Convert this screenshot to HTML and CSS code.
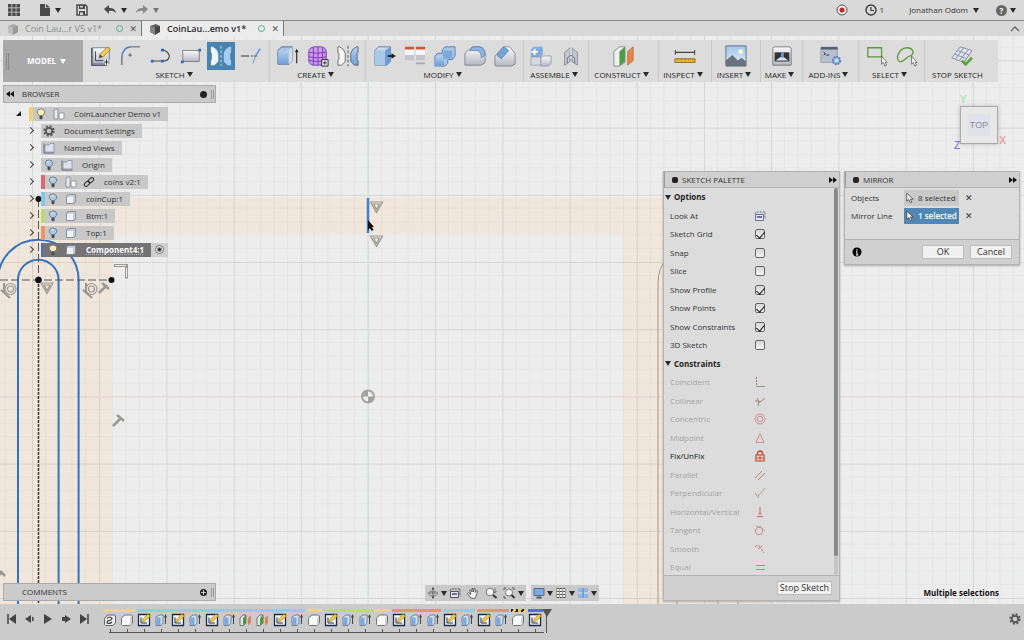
FILE: index.html
```html
<!DOCTYPE html>
<html lang="en">
<head>
<meta charset="utf-8">
<title>CoinLauncher Demo v1</title>
<link rel="stylesheet" href="styles.css">
</head>
<body>
<svg class="defs" aria-hidden="true">
  <defs>
    <linearGradient id="blue" x1="0" y1="0" x2="0" y2="1"><stop offset="0" stop-color="#b4d0ec"/><stop offset="1" stop-color="#6f9fd6"/></linearGradient>
    <linearGradient id="silver" x1="0" y1="0" x2="0" y2="1"><stop offset="0" stop-color="#fbfbfd"/><stop offset="1" stop-color="#b6b8c4"/></linearGradient>
    <linearGradient id="sky" x1="0" y1="0" x2="0" y2="1"><stop offset="0" stop-color="#9fc6ea"/><stop offset="1" stop-color="#e6f1f8"/></linearGradient>
  </defs>
  <symbol id="i-sketch" viewBox="0 0 24 24"><path d="M2 3v19h17" fill="none" stroke="#2c3140" stroke-width="1.2"/><path d="M3 3h18v17H3z" fill="url(#silver)" stroke="#5d6377" stroke-width=".8"/><path d="M6 7v10h9" fill="none" stroke="#33405e"/><path d="M10 14l1-4 8-8 3 3-8 8z" fill="#f2cf55" stroke="#8f6c20" stroke-width=".8"/><path d="M10 14l1-4 2.500 2.800z" fill="#444"/><path d="M18 15v7M14.500 18.500h7" stroke="#fff" stroke-width="3"/><path d="M18 15.500v6M15 18.500h6" stroke="#333" stroke-width="1.200"/></symbol>
  <symbol id="i-fillet" viewBox="0 0 24 24"><path d="M2 22v-9" stroke="#444" fill="none"/><path d="M2 14Q2 3 12 2" fill="none" stroke="#4d7fc4" stroke-width="1.600"/><path d="M12 2h10" stroke="#555"/><path d="M9 11h4M11 9v4" stroke="#555"/></symbol>
  <symbol id="i-line" viewBox="0 0 24 24"><path d="M2 17.500h11M13 17.500c10 0 11-8 1-12.500" fill="none" stroke="#444" stroke-width="1.200"/><path d="M1 16h3v3H1zM12 16h3v3h-3zM12 4h3v3h-3z" fill="#3565c8"/></symbol>
  <symbol id="i-rect" viewBox="0 0 24 24"><path d="M3 6h18v12H3z" fill="url(#silver)" stroke="#666" stroke-width=".8"/><path d="M1 17h3v3H1zM20 4h3v3h-3z" fill="#3565c8"/></symbol>
  <symbol id="i-mirror" viewBox="0 0 24 24"><path d="M3 2l4 3 2 4v9l-4 4H1v-5l1-1V9L1 8V2z" fill="#eef4fb"/><path d="M21 2l-4 3-2 4v9l4 4h4v-5l-1-1V9l1-1V2z" fill="#a6cdef"/><path d="M12 1v22" stroke="#cfe2f2" stroke-dasharray="3 2"/></symbol>
  <symbol id="i-trim" viewBox="0 0 24 24"><path d="M1 12h9" stroke="#444" stroke-width="1.200"/><path d="M12 12h7" stroke="#333" stroke-dasharray="2 1"/><path d="M14 20l3-8" stroke="#5a92d8"/><path d="M17 12l5-8" stroke="#5a92d8" stroke-width="1.600"/></symbol>
  <symbol id="i-extrude" viewBox="0 0 24 24"><path d="M1 6l4-4h12v15l-4 4H1z" fill="#a5c6ea" stroke="#3c506c" stroke-width=".8"/><path d="M1.500 6h11v15h-11z" fill="url(#blue)"/><path d="M13 6v15l4-4V2z" fill="#d9dce8"/><path d="M21.500 20V6" stroke="#222" stroke-width="1.200"/><path d="M19.500 8l2-4 2 4z" fill="#222"/></symbol>
  <symbol id="i-form" viewBox="0 0 24 24"><path d="M2 7q0-4 6-5h8q5 1 5 6v9q-1 5-7 5H7q-5-1-5-5z" fill="#c99bea" stroke="#7d34b2"/><path d="M2 8q9 2 19 0M2 13q9 2 19 0M2 17q9 2 18 0M7 3v19M12 2v20M17 3v18" stroke="#7d34b2" fill="none"/><path d="M16 16h7v7h-7z" fill="#eee" stroke="#222"/><path d="M17.500 19.500h4M19.500 17.500v4" stroke="#222"/></symbol>
  <symbol id="i-mirror3" viewBox="0 0 24 24"><path d="M3 2l4 3 2 4v9l-4 4H1v-5l1-1V9L1 8V2z" fill="#f5f5f5" stroke="#444" stroke-width=".8"/><path d="M21 2l-4 3-2 4v9l4 4h4v-5l-1-1V9l1-1V2z" fill="url(#blue)" stroke="#3c506c" stroke-width=".8"/><path d="M12 1v22" stroke="#444" stroke-dasharray="3 2"/></symbol>
  <symbol id="i-press" viewBox="0 0 24 24"><path d="M1 6l4-4h13v16l-4 4H1z" fill="#c7dcf2" stroke="#4a5f80" stroke-width=".8"/><path d="M1 6h11v16H1z" fill="#a9c8ea"/><path d="M12 6v16h2l4-4V2z" fill="#6f9fd6"/><path d="M15 12h5" stroke="#222" stroke-width="2"/><path d="M19 9l5 3-5 3z" fill="#222"/></symbol>
  <symbol id="i-align" viewBox="0 0 24 24"><path d="M1 4h10v13H1zM13 4h10v13H13z" fill="#f6f6f8"/><path d="M1 11h10v6H1zM13 11h10v6H13z" fill="#c3c4cd"/><path d="M1 2h10v3H1zM13 2h10v3H13z" fill="#cf5736"/><path d="M13 19h10v2H13z" fill="#a9a9b4"/></symbol>
  <symbol id="i-combine" viewBox="0 0 24 24"><path d="M1 12l3-3h5V5l3-3h11v10l-3 4h-5v4l-3 3H1z" fill="#a9c8ea" stroke="#4167a0" stroke-width=".8"/><path d="M2 12h9v10H2z" fill="url(#blue)"/><path d="M10 6h10v9H10z" fill="#7daadb"/></symbol>
  <symbol id="i-round" viewBox="0 0 24 24"><path d="M1 22V9l8-7h8q6 1 6 9v8l-4 3z" fill="url(#silver)" stroke="#6c7082" stroke-width=".8"/><path d="M6 6l4-4h7q6 1 6 9l-4 3q0-8-6-8z" fill="#8db7e3" stroke="#4a6f9f" stroke-width=".7"/></symbol>
  <symbol id="i-chamfer" viewBox="0 0 24 24"><path d="M1 22V12l9-10h7l6 7v12l-4 2H3z" fill="url(#silver)" stroke="#6c7082" stroke-width=".8"/><path d="M3 11l8-9 5 4-8 9z" fill="#73a5dc" stroke="#4a6f9f" stroke-width=".7"/></symbol>
  <symbol id="i-joint" viewBox="0 0 24 24"><path d="M1 5l3-3h10v9l-3 3H1z" fill="#7fabdf"/><path d="M1 13h11v9H1z" fill="#d5d7e1" stroke="#80859a" stroke-width=".6"/><path d="M12 14l3-2h8v8l-3 3h-8z" fill="url(#silver)" stroke="#80859a" stroke-width=".7"/><path d="M5 4v7M1.500 7.500h7" stroke="#fff" stroke-width="2"/></symbol>
  <symbol id="i-asbuilt" viewBox="0 0 24 24"><path d="M5 8l6-5v15l-6 4zM19 8l-6-5v15l6 4z" fill="#c4c7d0" stroke="#777b88" stroke-width=".8"/><path d="M12 3v12" stroke="#fff"/><path d="M8 20v-6l4-3 4 3v6" fill="none" stroke="#70747f"/></symbol>
  <symbol id="i-plane" viewBox="0 0 24 24"><path d="M1 7l6-5h6v17l-6 4H1z" fill="#eef1f1" stroke="#6b7279" stroke-width=".8"/><path d="M7 7l6-5v16l-6 5z" fill="#4f9b45"/><path d="M16 7l6-5v15l-6 5z" fill="#e8854c" stroke="#b65d2c" stroke-width=".7"/></symbol>
  <symbol id="i-measure" viewBox="0 0 24 24"><path d="M1 8h22M1.500 5.500v5M22.500 5.500v5" stroke="#444" stroke-width="1.200"/><path d="M1 15h22v4H1z" fill="#e9b93b" stroke="#8a671c"/><path d="M4 15v2M8 15v2M12 15v2M16 15v2M20 15v2" stroke="#a58030"/></symbol>
  <symbol id="i-image" viewBox="0 0 24 24"><path d="M1 1h22v22H1z" fill="url(#sky)" stroke="#5a6a7e"/><circle cx="17" cy="7" r="2.500" fill="#fffad0"/><path d="M1 17l7-6 6 6 4-3 5 4v5H1z" fill="#69717f"/></symbol>
  <symbol id="i-make" viewBox="0 0 24 24"><path d="M2 4q0-2 3-2h14q3 0 3 2v18H2z" fill="url(#silver)" stroke="#777"/><path d="M4 8h16v10H4z" fill="#333"/><path d="M5 17l7-5 7 5z" fill="#dce9f5"/><path d="M11 8h3v5l-2 2-1-2z" fill="#6d9bd0"/></symbol>
  <symbol id="i-addin" viewBox="0 0 24 24"><path d="M1 3h18v16H1z" fill="#b7bfd1" stroke="#7d8598" stroke-width=".7"/><path d="M1 2h18v3H1z" fill="#56617a"/><path d="M4 8l2 1.500L4 11M7 11h3" stroke="#222" fill="none"/><circle cx="18" cy="17" r="4" fill="#9abbe2" stroke="#4d77b4" stroke-width="2" stroke-dasharray="2 1"/><circle cx="18" cy="17" r="1.500" fill="#e7eef8"/></symbol>
  <symbol id="i-arrow" viewBox="0 0 10 14"><path d="M1 1v10l2.500-2 1.800 4 2-1-1.800-3.600H9z" fill="#f5f5f5" stroke="#444"/></symbol>
  <symbol id="i-selrect" viewBox="0 0 24 24"><path d="M2 3h15v10H2z" fill="none" stroke="#5b9a38" stroke-width="1.400"/><path d="M17 12v9l2-2 1.500 4 2-1-1.500-3h2z" fill="#f5f5f5" stroke="#555" stroke-width=".8"/></symbol>
  <symbol id="i-lasso" viewBox="0 0 24 24"><path d="M4 18C-2 15 4 3 12 3c7 0 9 7 3 9-5 2-7 7-11 6z" fill="none" stroke="#5b9a38" stroke-width="1.400"/><path d="M17 12v9l2-2 1.500 4 2-1-1.500-3h2z" fill="#f5f5f5" stroke="#555" stroke-width=".8"/></symbol>
  <symbol id="i-stop" viewBox="0 0 24 24"><path d="M1 14L10 2l13 4-9 13z" fill="#e2e4ee" stroke="#858ba0"/><path d="M4 10l13 5M7 6l13 5M5 15l9-12M9 17l10-12" stroke="#858ba0" fill="none"/><path d="M12 17l4 4 7-7" fill="none" stroke="#58a83a" stroke-width="3"/></symbol>

  <symbol id="i-doc" viewBox="0 0 12 12"><path d="M1 3l6-2 4 2v6l-5 3-5-3z" fill="currentColor"/><path d="M1 3l5 1.500V12L1 9z" fill="#fff" opacity=".35"/><path d="M1 3l6-2 4 2-5 1.500z" fill="#fff" opacity=".15"/></symbol>
  <symbol id="i-bulb" viewBox="0 0 10 12"><path d="M3.300 7.500Q1 5.500 1.200 3.800 1.700 1 5 1t3.800 2.800Q9 5.500 6.700 7.500z" fill="currentColor" stroke="#5d6a78" stroke-width=".8"/><path d="M3.500 8h3v2.500L5 11.500l-1.500-1z" fill="#474d55"/><path d="M3.500 3.500q.500-1.300 2-1.200" stroke="#fff" fill="none"/></symbol>
  <symbol id="i-folder" viewBox="0 0 12 12"><path d="M1 1.500V11h10.500" fill="none" stroke="#626b80"/><path d="M2 3h4l1-1.500h4V10H2z" fill="#dfe2ec" stroke="#7e869a" stroke-width=".7"/></symbol>
  <symbol id="i-comp" viewBox="0 0 12 12"><path d="M1 2l2-1h2v10H1z" fill="#e6e8ee" stroke="#7e8390" stroke-width=".8"/><path d="M6 6l1.500-1H11v5l-1.500 1H6z" fill="#fafafa" stroke="#7e8390" stroke-width=".8"/></symbol>
  <symbol id="i-body" viewBox="0 0 12 12"><path d="M1.500 4q0-2.500 2.500-2.500h6.500V8q0 2.500-2.500 2.500H1.500z" fill="#c9cddb" stroke="#7b8090" stroke-width=".8"/><path d="M2 4h6v6H2z" fill="#f1f2f6"/></symbol>
  <symbol id="i-gear" viewBox="0 0 12 12"><circle cx="6" cy="6" r="4.800" fill="none" stroke="currentColor" stroke-width="1.800" stroke-dasharray="2 1.770"/><circle cx="6" cy="6" r="3.200" fill="none" stroke="currentColor" stroke-width="1.800"/></symbol>
  <symbol id="i-link" viewBox="0 0 12 12"><g fill="none" stroke="#333" stroke-width="1.100"><rect x="5" y="2.500" width="6" height="3.600" rx="1.800" transform="rotate(-45 8 4.300)"/><rect x="1" y="6" width="6" height="3.600" rx="1.800" transform="rotate(-45 4 7.800)"/></g></symbol>

  <symbol id="t-sketch" viewBox="0 0 14 14"><path d="M1.500 1.500h11v11h-11z" fill="#f5f7fa" stroke="#1d2c44" stroke-width="1.300"/><path d="M4 4.500V10h6" fill="none" stroke="#1d2c44"/><path d="M5 9l1-3 5-5 2.500 2L8 8z" fill="#efc748" stroke="#91701f" stroke-width=".5"/></symbol>
  <symbol id="t-extrude" viewBox="0 0 14 14"><path d="M2 4l3-2h4v8l-2 2.500H2z" fill="#d3e0f0" stroke="#5d6d86" stroke-width=".8"/><path d="M2.500 4.500h4V12h-4z" fill="#7daadd"/><path d="M11.500 11V3" stroke="#444"/><path d="M10 4.500L11.500 1 13 4.500z" fill="#444"/></symbol>
  <symbol id="t-body" viewBox="0 0 14 14"><path d="M1.500 5.500l3-3.500h7l1 1v7l-3 2.500h-7l-1-1z" fill="#fafafa" stroke="#70737a"/><path d="M10 5l2-2.500V10l-2 2z" fill="#cfd1d8"/></symbol>
  <symbol id="t-link" viewBox="0 0 14 14"><path d="M1.500 5.500l3-3.500h7l1 1v7l-3 2.500h-7l-1-1z" fill="#ededed" stroke="#60636a"/><path d="M4 5.500q3-3 5 0-1 2-3 2t-2 2.500q3 1 5-1" fill="none" stroke="#333" stroke-width="1.100"/></symbol>
  <symbol id="t-plane" viewBox="0 0 14 14"><path d="M1 5l3-3h3v8l-3 2.500H1z" fill="#e5eae5" stroke="#555" stroke-width=".8"/><path d="M4 5l3-3v8l-3 2.500z" fill="#4f9b45"/><path d="M9 5l3-3v8l-3 2.500z" fill="#dd8158"/></symbol>
</svg>

<header class="topbar">
  <div class="top-left">
    <button class="plain" aria-label="Data panel"><svg width="12" height="12" viewBox="0 0 12 12"><path d="M0 0h3.500v3.500H0zM4.200 0h3.500v3.500H4.200zM8.400 0H12v3.500H8.400zM0 4.200h3.500v3.500H0zM4.200 4.200h3.500v3.500H4.200zM8.400 4.200H12v3.500H8.400zM0 8.400h3.500V12H0zM4.200 8.400h3.500V12H4.200zM8.400 8.400H12V12H8.400z" fill="#4b4b4b"/></svg></button>
    <button class="plain file" aria-label="File"><svg width="10" height="12" viewBox="0 0 10 12"><path d="M0 0h5v4h5v8H0z" fill="#4b4b4b"/><path d="M6 0l4 3.500H6z" fill="#4b4b4b"/></svg><i class="caret"></i></button>
    <button class="plain save" aria-label="Save"><svg width="12" height="12" viewBox="0 0 12 12"><path d="M1 1h8.500L11 2.500V11H1z" fill="none" stroke="#4b4b4b" stroke-width="1.500"/><path d="M3 1h6v4H3zM3 7h6v4H3z" fill="#4b4b4b"/><path d="M4 8.500h3V11H4zM4 2h3v1.500H4z" fill="#d8d8d8"/></svg></button>
    <button class="plain undo" aria-label="Undo"><svg width="12" height="10" viewBox="0 0 12 10"><path d="M0 4l5-4v3q6-.5 7 5-3-3-7-2v3z" fill="#4b4b4b"/></svg><i class="caret"></i></button>
    <button class="plain redo" aria-label="Redo"><svg width="12" height="10" viewBox="0 0 12 10"><path d="M12 4L7 0v3Q1 2.500 0 8q3-3 7-2v3z" fill="#8a8a8a"/></svg><i class="caret dim"></i></button>
  </div>
  <div class="top-right">
    <button class="plain" aria-label="Record"><svg width="12" height="12" viewBox="0 0 12 12"><circle cx="6" cy="6" r="5" fill="#eee" stroke="#555"/><circle cx="6" cy="6" r="2.500" fill="#d02020"/></svg></button>
    <button class="plain jobs"><svg width="12" height="12" viewBox="0 0 12 12"><circle cx="6" cy="6" r="5" fill="none" stroke="#3c3c3c" stroke-width="1.400"/><path d="M6 3v3.500h3" fill="none" stroke="#3c3c3c" stroke-width="1.200"/></svg>1</button>
    <button class="plain user">Jonathan Odom<i class="caret"></i></button>
    <button class="plain help" aria-label="Help"><span class="help-mark">?</span><i class="caret"></i></button>
  </div>
</header>

<nav class="tabs" aria-label="Documents">
  <div class="tab"><svg class="doc" width="12" height="12"><use href="#i-doc"/></svg><a href="#v5">Coin Lau...r V5 v1*</a><i class="ring"></i><button class="plain close" aria-label="Close tab">✕</button></div>
  <div class="tab active"><svg class="doc" width="12" height="12"><use href="#i-doc"/></svg><a href="#demo">CoinLau...emo v1*</a><i class="ring"></i><button class="plain close" aria-label="Close tab">✕</button></div>
  <button class="plain collapse" aria-label="Collapse"><svg width="10" height="6" viewBox="0 0 10 6"><path d="M1 5l4-4 4 4" fill="none" stroke="#666" stroke-width="1.300"/></svg></button>
</nav>

<main class="viewport">
  <svg class="canvas" aria-hidden="true">
    <defs>
      <pattern id="grid" width="67.200" height="67.200" patternUnits="userSpaceOnUse" x="368" y="396.400">
        <path d="M13.400 0v67.200M26.900 0v67.200M40.300 0v67.200M53.800 0v67.200M0 13.400h67.200M0 26.900h67.200M0 40.300h67.200M0 53.800h67.200" stroke="#6f7f7f" stroke-opacity=".07"/>
        <path d="M.5 0v67.200M0 .5h67.200" stroke="#6f7f7f" stroke-opacity=".2"/>
      </pattern>
    </defs>
    <g transform="translate(0 -36)">
      <path d="M0 198H771V640H623V234H112V640H0z" fill="#f0e6dc"/>
      <rect x="0" y="0" width="100%" height="1200" fill="url(#grid)"/>
      <path d="M0 396.500H4000" stroke="#ecd9d7"/>
      <path d="M368 36V1200" stroke="#d0e6da" stroke-width="1.500"/>
      <g fill="none" stroke="#a0958b"><path d="M668 258Q658 266 658 284V640M677 595V640M718 595V640M738 595V640"/></g>
      <g fill="none" stroke="#3473bd" stroke-width="2">
        <path d="M-2 640V280a40.300 40.300 0 0 1 80.600 0V640M18 640V280a20.300 20.300 0 0 1 40.600 0V640"/>
        <path d="M368 198v35" stroke="#3f7fd4" stroke-width="2.500"/>
      </g>
      <g fill="none" stroke="#555">
        <path d="M38.500 199v81" stroke-dasharray="8 3"/><path d="M38.500 280V640" stroke="#3b3b3b" stroke-width="1.500" stroke-dasharray="3 1"/><path d="M0 280h111" stroke-dasharray="8 3"/>
      </g>
      <g fill="#111"><circle cx="38.500" cy="199" r="3"/><circle cx="38.500" cy="280" r="3.300"/><circle cx="111.500" cy="280" r="3"/></g>
      <g fill="none" stroke="#9b9791" stroke-width="1.200">
        <path d="M41 283h12l-6 10.500zM44 285h6l-3 5.500z"/>
        <path d="M370.500 202h12l-6 10.500zM373.500 204h6l-3 5.500zM370.500 236h12l-6 10.500zM373.500 238h6l-3 5.500z"/>
        <circle cx="10.500" cy="289" r="5.500"/><circle cx="10.500" cy="289" r="3"/><path d="M1 290l9 8M4 283v10" stroke-width="2"/>
        <circle cx="91.500" cy="289" r="5.500"/><circle cx="91.500" cy="289" r="3"/><path d="M83 290l9 8M86 283v10" stroke-width="2"/>
      </g>
      <g fill="none" stroke="#9b9893" stroke-width="2.500">
        <path d="M99 293l8-8M102 283l7 6M113 426l8-8M117 415l7 6M-4 578l6-6M0 571l5 5"/>
        <path d="M114 265.500h12.500v13" stroke-width="3"/><path d="M115 265.500h11M126.500 268v9" stroke="#eee" stroke-width="1"/>
      </g>
      <circle cx="368" cy="396.500" r="6" fill="#eee" stroke="#a2a39f" stroke-width="2"/><path d="M368 396.500v-6a6 6 0 0 0-6 6zM368 396.500v6a6 6 0 0 0 6-6z" fill="#a2a39f"/>
      <path d="M368 220v10l2-2 1.500 3 2-1-1.500-3h2z" fill="#111"/>
    </g>
  </svg>

  <div class="toolbar">
    <button class="mode"><span class="grip"></span>MODEL<i class="caret"></i></button>
    <div class="groups">
      <section class="group"><div class="tools"><button class="tool" aria-label="Create sketch"><svg><use href="#i-sketch"/></svg></button><button class="tool" aria-label="Fillet"><svg><use href="#i-fillet"/></svg></button><button class="tool" aria-label="Line"><svg><use href="#i-line"/></svg></button><button class="tool" aria-label="Rectangle"><svg><use href="#i-rect"/></svg></button><button class="tool on" aria-label="Mirror"><svg><use href="#i-mirror"/></svg></button><button class="tool" aria-label="Trim"><svg><use href="#i-trim"/></svg></button></div><button class="menu">SKETCH<i class="caret"></i></button></section>
      <section class="group"><div class="tools"><button class="tool" aria-label="Extrude"><svg><use href="#i-extrude"/></svg></button><button class="tool" aria-label="Form"><svg><use href="#i-form"/></svg></button><button class="tool" aria-label="Mirror body"><svg><use href="#i-mirror3"/></svg></button></div><button class="menu">CREATE<i class="caret"></i></button></section>
      <section class="group"><div class="tools"><button class="tool" aria-label="Press pull"><svg><use href="#i-press"/></svg></button><button class="tool" aria-label="Align"><svg><use href="#i-align"/></svg></button><button class="tool" aria-label="Combine"><svg><use href="#i-combine"/></svg></button><button class="tool" aria-label="Round"><svg><use href="#i-round"/></svg></button><button class="tool" aria-label="Chamfer"><svg><use href="#i-chamfer"/></svg></button></div><button class="menu">MODIFY<i class="caret"></i></button></section>
      <section class="group"><div class="tools"><button class="tool" aria-label="Joint"><svg><use href="#i-joint"/></svg></button><button class="tool" aria-label="As-built joint"><svg><use href="#i-asbuilt"/></svg></button></div><button class="menu">ASSEMBLE<i class="caret"></i></button></section>
      <section class="group"><div class="tools"><button class="tool" aria-label="Offset plane"><svg><use href="#i-plane"/></svg></button></div><button class="menu">CONSTRUCT<i class="caret"></i></button></section>
      <section class="group"><div class="tools"><button class="tool" aria-label="Measure"><svg><use href="#i-measure"/></svg></button></div><button class="menu">INSPECT<i class="caret"></i></button></section>
      <section class="group"><div class="tools"><button class="tool" aria-label="Image"><svg><use href="#i-image"/></svg></button></div><button class="menu">INSERT<i class="caret"></i></button></section>
      <section class="group"><div class="tools"><button class="tool" aria-label="3D print"><svg><use href="#i-make"/></svg></button></div><button class="menu">MAKE<i class="caret"></i></button></section>
      <section class="group"><div class="tools"><button class="tool" aria-label="Scripts"><svg><use href="#i-addin"/></svg></button></div><button class="menu">ADD-INS<i class="caret"></i></button></section>
      <section class="group"><div class="tools"><button class="tool" aria-label="Window select"><svg><use href="#i-selrect"/></svg></button><button class="tool" aria-label="Freeform select"><svg><use href="#i-lasso"/></svg></button></div><button class="menu">SELECT<i class="caret"></i></button></section>
      <section class="group"><div class="tools"><button class="tool" aria-label="Finish sketch"><svg><use href="#i-stop"/></svg></button></div><button class="menu last">STOP SKETCH</button></section>
    </div>
  </div>

  <div class="workspace">
    <aside class="left">
      <div class="browser">
        <header class="bar"><svg width="8" height="6" viewBox="0 0 8 6"><path d="M4 0v6L0 3zM8 0v6L4 3z" fill="#111"/></svg><h2>BROWSER</h2><i class="dot"></i><i class="edge"></i></header>
        <ul class="tree">
          <li class="root"><i class="open"></i><div class="node yellow"><svg class="bulb lit"><use href="#i-bulb"/></svg><svg><use href="#i-comp"/></svg><span>CoinLauncher Demo v1</span></div></li>
          <li><i class="twist"></i><div class="node"><svg class="gear"><use href="#i-gear"/></svg><span>Document Settings</span></div></li>
          <li><i class="twist"></i><div class="node"><svg><use href="#i-folder"/></svg><span>Named Views</span></div></li>
          <li><i class="twist"></i><div class="node"><svg class="bulb"><use href="#i-bulb"/></svg><svg><use href="#i-folder"/></svg><span>Origin</span></div></li>
          <li><i class="twist"></i><div class="node red"><svg class="bulb"><use href="#i-bulb"/></svg><svg><use href="#i-comp"/></svg><svg><use href="#i-link"/></svg><span>coins v2:1</span></div></li>
          <li><i class="twist"></i><div class="node sky"><svg class="bulb"><use href="#i-bulb"/></svg><svg><use href="#i-body"/></svg><span>coinCup:1</span></div></li>
          <li><i class="twist"></i><div class="node lime"><svg class="bulb"><use href="#i-bulb"/></svg><svg><use href="#i-body"/></svg><span>Btm:1</span></div></li>
          <li><i class="twist"></i><div class="node orange"><svg class="bulb"><use href="#i-bulb"/></svg><svg><use href="#i-body"/></svg><span>Top:1</span></div></li>
          <li><i class="twist"></i><div class="node indigo"><svg class="bulb lit"><use href="#i-bulb"/></svg><svg><use href="#i-body"/></svg><span>Component4:1</span></div><label class="activate"><input type="radio" name="active" checked aria-label="Activate Component4:1"></label></li>
        </ul>
      </div>
      <div class="bar comments"><h2>COMMENTS</h2><i class="dot plus"></i><i class="edge"></i></div>
    </aside>

    <div class="dock">
      <section class="panel palette">
        <header class="panel-head"><i class="pin"></i><h2>SKETCH PALETTE</h2><svg width="8" height="6" viewBox="0 0 8 6"><path d="M4 0v6l4-3zM0 0v6l4-3z" fill="#111"/></svg></header>
        <div class="rows">
          <h3 class="row"><i class="caret"></i>Options</h3>
          <div class="row"><span>Look At</span><button class="plain" aria-label="Look At"><svg width="12" height="12" viewBox="0 0 12 12"><path d="M1 4l1-2h9v7" fill="none" stroke="#69729a" stroke-dasharray="2 1"/><path d="M1.500 4.500h8v6h-8z" fill="#e5e8f2" stroke="#69729a"/><path d="M3 6h5v2H3z" fill="#69729a"/></svg></button></div>
          <div class="row"><label for="c1">Sketch Grid</label><input id="c1" type="checkbox" checked></div>
          <div class="row"><label for="c2">Snap</label><input id="c2" type="checkbox"></div>
          <div class="row"><label for="c3">Slice</label><input id="c3" type="checkbox"></div>
          <div class="row"><label for="c4">Show Profile</label><input id="c4" type="checkbox" checked></div>
          <div class="row"><label for="c5">Show Points</label><input id="c5" type="checkbox" checked></div>
          <div class="row"><label for="c6">Show Constraints</label><input id="c6" type="checkbox" checked></div>
          <div class="row"><label for="c7">3D Sketch</label><input id="c7" type="checkbox"></div>
          <h3 class="row"><i class="caret"></i>Constraints</h3>
          <div class="row off"><span>Coincident</span><button class="plain" disabled aria-label="Coincident"><svg width="12" height="12" viewBox="0 0 12 12"><path d="M2.500 1v8" stroke="#a77" stroke-dasharray="2 1"/><path d="M2 10.500h9" stroke="#998"/></svg></button></div>
          <div class="row off"><span>Collinear</span><button class="plain" disabled aria-label="Collinear"><svg width="12" height="12" viewBox="0 0 12 12"><path d="M1 6h4l-1 5M3 3l3 5M6 7l5-4" fill="none" stroke="#a58080"/></svg></button></div>
          <div class="row off"><span>Concentric</span><button class="plain" disabled aria-label="Concentric"><svg width="12" height="12" viewBox="0 0 12 12"><circle cx="6" cy="6" r="5" fill="none" stroke="#d78c96"/><circle cx="6" cy="6" r="2.800" fill="none" stroke="#c18f98"/></svg></button></div>
          <div class="row off"><span>Midpoint</span><button class="plain" disabled aria-label="Midpoint"><svg width="12" height="12" viewBox="0 0 12 12"><path d="M6 1.500l4 9H2z" fill="none" stroke="#d78c96"/></svg></button></div>
          <div class="row strong"><span>Fix/UnFix</span><button class="plain" aria-label="Fix/UnFix"><svg width="12" height="12" viewBox="0 0 12 12"><path d="M3.500 5V3.500a2.500 2.500 0 0 1 5 0V5" fill="none" stroke="#c4492c" stroke-width="1.400"/><path d="M2 5h8v6H2z" fill="#f1ded5" stroke="#c4492c" stroke-width="1.200"/><path d="M6 5v6M2 8h8" stroke="#c4492c"/></svg></button></div>
          <div class="row off"><span>Parallel</span><button class="plain" disabled aria-label="Parallel"><svg width="12" height="12" viewBox="0 0 12 12"><path d="M1 9l7-7M4 11l7-7" stroke="#b58484"/></svg></button></div>
          <div class="row off"><span>Perpendicular</span><button class="plain" disabled aria-label="Perpendicular"><svg width="12" height="12" viewBox="0 0 12 12"><path d="M1 6l4 5M4 9l7-8" stroke="#bd8a8e"/></svg></button></div>
          <div class="row off"><span>Horizontal/Vertical</span><button class="plain" disabled aria-label="Horizontal/Vertical"><svg width="12" height="12" viewBox="0 0 12 12"><path d="M6 1v6M4.500 7.500h3M3 10.500h6" stroke="#cb7d86" stroke-width="1.300"/></svg></button></div>
          <div class="row off"><span>Tangent</span><button class="plain" disabled aria-label="Tangent"><svg width="12" height="12" viewBox="0 0 12 12"><circle cx="5" cy="7" r="3.700" fill="none" stroke="#d78c96"/><path d="M2 2.500h5l4 5" fill="none" stroke="#b99" stroke-dasharray="2 1"/></svg></button></div>
          <div class="row off"><span>Smooth</span><button class="plain" disabled aria-label="Smooth"><svg width="12" height="12" viewBox="0 0 12 12"><path d="M1 4q3-3 5 0t4 6M4 6l4-3" fill="none" stroke="#b9747e" stroke-dasharray="3 1"/></svg></button></div>
          <div class="row off"><span>Equal</span><button class="plain" disabled aria-label="Equal"><svg width="12" height="12" viewBox="0 0 12 12"><path d="M2 4.500h9M2 8.500h9" stroke="#cb7d86"/></svg></button></div>
          <i class="scroll"></i>
        </div>
        <footer class="panel-foot"><button class="btn">Stop Sketch</button></footer>
      </section>

      <section class="panel mirror">
        <header class="panel-head"><i class="pin"></i><h2>MIRROR</h2><svg width="8" height="6" viewBox="0 0 8 6"><path d="M4 0v6l4-3zM0 0v6l4-3z" fill="#111"/></svg></header>
        <div class="fields">
          <div class="field"><span>Objects</span><button class="pick"><svg width="8" height="12"><use href="#i-arrow"/></svg>8 selected</button><button class="plain clear" aria-label="Clear objects">✕</button></div>
          <div class="field"><span>Mirror Line</span><button class="pick on"><svg width="8" height="12"><use href="#i-arrow"/></svg>1 selected</button><button class="plain clear" aria-label="Clear mirror line">✕</button></div>
        </div>
        <footer class="panel-foot"><svg class="info" width="10" height="10" viewBox="0 0 10 10"><circle cx="5" cy="5" r="4.500" fill="#000"/><path d="M5 2v1.500M4 4.500h1V8M4 8h2.500" stroke="#fff" fill="none"/></svg><button class="btn">OK</button><button class="btn">Cancel</button></footer>
      </section>
    </div>

    <div class="cube"><button class="face">TOP</button><b class="ax-y">Y</b><b class="ax-z">Z</b><b class="ax-x">X</b></div>

    <div class="navbar">
      <div class="nav-set">
        <button class="plain" aria-label="Orbit"><svg width="12" height="12" viewBox="0 0 12 12"><path d="M6 1v10M1 6h10" stroke="#555" stroke-width=".8"/><ellipse cx="6" cy="6.500" rx="4.500" ry="2.200" fill="none" stroke="#777" stroke-width=".8"/><path d="M4.500 2.500L6 0l1.500 2.500zM4.500 9.500L6 12l1.500-2.500z" fill="#444"/></svg><i class="caret"></i></button>
        <button class="plain" aria-label="Look at"><svg width="12" height="12" viewBox="0 0 12 12"><path d="M1 4l1-2h9v7" fill="none" stroke="#555" stroke-dasharray="2 1"/><path d="M1.500 4.500h8v6h-8z" fill="#e5e8f2" stroke="#555"/><path d="M3 6h5v2H3z" fill="#69729a"/></svg></button>
        <button class="plain hand" aria-label="Pan"><svg width="14" height="12" viewBox="0 0 14 12"><path d="M5 11L1.500 6.500l1-.8L5 7.500 3.500 3l1-.5L6 5V1.500h1.200V5l1-3.500 1.200.3L9 5.500l1.800-2 .9.700L10 9l-1 2.500z" fill="#fafafa" stroke="#555" stroke-width=".9"/></svg></button>
        <button class="plain hand" aria-label="Zoom"><svg width="13" height="12" viewBox="0 0 13 12"><circle cx="5" cy="5" r="3.800" fill="#f4f6f8" stroke="#777"/><path d="M8 8l3.500 3" stroke="#333" stroke-width="2"/><path d="M10 1v5M8.500 4l1.500 2 1.500-2" stroke="#777" fill="none"/></svg></button>
        <button class="plain hand" aria-label="Fit"><svg width="13" height="12" viewBox="0 0 13 12"><path d="M1 3V1h2M9 1h2v2M1 9v2h2" stroke="#555" fill="none"/><circle cx="6" cy="5.500" r="3.500" fill="#f4f6f8" stroke="#777"/><path d="M8.500 8l3 3" stroke="#333" stroke-width="2"/></svg><i class="caret"></i></button>
      </div>
      <div class="nav-set">
        <button class="plain" aria-label="Display settings"><svg width="12" height="12" viewBox="0 0 12 12"><path d="M1 1.500h10v7H1z" fill="#7faade" stroke="#4b6c98"/><path d="M4 9.500h4l1 2H3z" fill="#555"/></svg><i class="caret"></i></button>
        <button class="plain" aria-label="Grid settings"><svg width="12" height="12" viewBox="0 0 12 12"><path d="M1 1h10v10H1z" fill="#eee"/><path d="M1 1.500h10M1 4.500h10M1 7.500h10M1 10.500h10" stroke="#555"/><path d="M1.500 1v10M4.500 1v10M7.500 1v10M10.500 1v10" stroke="#999"/></svg><i class="caret"></i></button>
        <button class="plain" aria-label="Viewports"><svg width="12" height="12" viewBox="0 0 12 12"><path d="M1 1h10v10H1z" fill="#8fb6e6"/><path d="M6 1v10M1 6h10" stroke="#dce9f8"/><path d="M6 1v10" stroke="#49699b"/></svg><i class="caret"></i></button>
      </div>
    </div>
    <p class="status">Multiple selections</p>
  </div>
</main>

<footer class="timeline">
  <div class="play">
    <button class="plain" aria-label="Go to start"><svg width="10" height="10" viewBox="0 0 10 10"><path d="M1 0v10" stroke="#444" stroke-width="1.500"/><path d="M9 0v10L2 5z" fill="#444"/></svg></button>
    <button class="plain" aria-label="Step back"><svg width="10" height="10" viewBox="0 0 10 10"><path d="M6 1v8L0 5z" fill="#444"/><path d="M7 3h1.500v4H7z" fill="#444"/></svg></button>
    <button class="plain" aria-label="Play"><svg width="10" height="10" viewBox="0 0 10 10"><path d="M1 0v10l8-5z" fill="#444"/></svg></button>
    <button class="plain" aria-label="Step forward"><svg width="10" height="10" viewBox="0 0 10 10"><path d="M4 1v8l6-4z" fill="#444"/><path d="M1 3h3v4H1z" fill="#444"/></svg></button>
    <button class="plain" aria-label="Go to end"><svg width="10" height="10" viewBox="0 0 10 10"><path d="M9 0v10" stroke="#444" stroke-width="1.500"/><path d="M1 0v10l7-5z" fill="#444"/></svg></button>
  </div>
  <div class="track">
    <div class="span yellow"><svg><use href="#t-link"/></svg><svg><use href="#t-body"/></svg></div>
    <div class="span sky"><svg><use href="#t-sketch"/></svg><svg><use href="#t-extrude"/></svg><svg><use href="#t-sketch"/></svg><svg><use href="#t-extrude"/></svg><svg><use href="#t-sketch"/></svg><svg><use href="#t-extrude"/></svg><svg><use href="#t-plane"/></svg><svg><use href="#t-plane"/></svg><svg><use href="#t-sketch"/></svg><svg><use href="#t-extrude"/></svg></div>
    <div class="span yellow"><svg><use href="#t-body"/></svg></div>
    <div class="span lime"><svg><use href="#t-sketch"/></svg><svg><use href="#t-extrude"/></svg><svg><use href="#t-extrude"/></svg></div>
    <div class="span yellow"><svg><use href="#t-body"/></svg></div>
    <div class="span orange"><svg><use href="#t-sketch"/></svg><svg><use href="#t-extrude"/></svg><svg><use href="#t-extrude"/></svg></div>
    <div class="span sky"><svg><use href="#t-sketch"/></svg><svg><use href="#t-extrude"/></svg></div>
    <div class="span orange"><svg><use href="#t-sketch"/></svg><svg><use href="#t-extrude"/></svg></div>
    <div class="span hatch"><svg><use href="#t-body"/></svg></div>
    <div class="span indigo"><svg><use href="#t-sketch"/></svg></div>
    <i class="marker"></i>
  </div>
  <button class="plain settings" aria-label="Timeline settings"><svg width="12" height="12"><use href="#i-gear"/></svg></button>
</footer>
</body>
</html>
```
FILE: styles.css
```css
* { box-sizing: border-box; }
html, body { height: 100%; }
body {
  margin: 0;
  display: flex;
  flex-direction: column;
  overflow: hidden;
  background: #ededed;
  color: #333;
  font: 8px/12px "Open Sans", "Noto Sans", sans-serif;
}
h2, h3, ul, p { margin: 0; padding: 0; font: inherit; list-style: none; }
button { font: inherit; color: inherit; margin: 0; padding: 0; border: 0; background: none; }
a { color: inherit; text-decoration: none; }
svg { flex: none; display: block; }
.defs { position: absolute; width: 0; height: 0; }
.plain { display: flex; align-items: center; }
.caret {
  flex: none;
  display: inline-block;
  border: solid transparent;
  border-width: 5px 3px 0;
  border-top-color: #2b2b2b;
}
.caret.dim { border-top-color: #777; }

/* Application bar */
.topbar {
  flex: none;
  display: flex;
  justify-content: space-between;
  height: 21px;
  padding: 0 8px;
  background: #d9d9d9;
  border-bottom: 1px solid #8b8d8b;
}
.top-left, .top-right { display: flex; align-items: center; }
.topbar .caret { margin-left: 5px; }
.file { margin-left: 20px; }
.save { margin-left: 15px; }
.undo { margin-left: 16px; }
.redo { margin-left: 9px; }
.jobs { margin-left: 17px; gap: 3px; }
.user { margin-left: 25px; font-weight: 500; }
.user .caret { margin-left: 5px; }
.help { margin-left: 17px; }
.help .caret { margin-left: 3px; }
.help-mark {
  width: 11px;
  border-radius: 50%;
  background: #666;
  color: #fff;
  font-weight: 700;
  line-height: 11px;
  text-align: center;
}

/* Document tabs */
.tabs { flex: none; display: flex; height: 15px; background: #d8d8d8; }
.tab {
  display: flex;
  align-items: center;
  width: 142px;
  padding: 0 4px 0 7px;
  border-right: 1px solid #777;
  color: #8b8b8b;
  font-size: 9px;
}
.tab.active { background: #ececec; color: #2b2b2b; font-weight: 600; }
.doc { margin-right: 6px; color: #999; }
.active .doc { color: #444; }
.ring { width: 7px; height: 7px; margin-left: auto; border: 1px solid #4bb08a; border-radius: 50%; }
.close { margin-left: 6px; color: #555; font: 9px/12px "DejaVu Sans", sans-serif; }
.collapse { margin: 0 4px 0 auto; }

/* Model view */
.viewport { position: relative; flex: 1; min-height: 0; display: flex; flex-direction: column; }
.canvas { position: absolute; inset: 0; width: 100%; height: 100%; overflow: hidden; }
.toolbar { position: relative; flex: none; display: flex; margin: 4px 26px 0 3px; height: 42px; background: #dcdcdc; }
.mode {
  position: relative;
  flex: none;
  display: flex;
  align-items: center;
  justify-content: center;
  gap: 4px;
  width: 80px;
  background: #a9a9a9;
  color: #fff;
  font-weight: 700;
}
.mode .caret { border-top-color: #fff; }
.grip { width: 3px; height: 17px; margin: 0 14px 0 -14px; border: solid #888; border-width: 0 1px; }
.groups { flex: 1; display: grid; grid-template-columns: 186fr 96fr 158fr 65fr 70fr 53fr 49fr 42fr 56fr 66fr 74fr; }
.group { min-width: 0; display: flex; flex-direction: column; align-items: center; padding-top: 2px; }
.group + .group { border-left: 1px solid #c9c9c9; }
.tools { display: flex; gap: 2px; }
.tool { display: grid; place-items: center; width: 28px; height: 28px; }
.tool svg { width: 22px; height: 22px; }
.tool.on { background: #4a83b0; }
.menu { display: flex; align-items: center; gap: 2px; height: 9px; padding-right: 4px; color: #222; font-weight: 500; white-space: nowrap; }
.last { padding: 0 8px 0 0; }

.workspace { position: relative; flex: 1; min-height: 0; display: flex; justify-content: space-between; padding: 3px 4px 3px 3px; }
.left { display: flex; flex-direction: column; justify-content: space-between; width: 213px; }
.bar { display: flex; align-items: center; height: 18px; padding: 0 1px 0 2px; background: #cbcbcb; border: 1px solid #aaa; }
.bar h2 { margin-left: 8px; }
.comments h2 { margin-left: 16px; }
.dot { width: 7px; height: 7px; margin-left: auto; border-radius: 50%; background: #222; }
.plus { background: linear-gradient(#ccc, #ccc) 50% 50% / 5px 1px no-repeat, linear-gradient(#ccc, #ccc) 50% 50% / 1px 5px no-repeat, #222; }
.edge { width: 3px; height: 9px; margin-left: 4px; border: solid #999; border-width: 0 1px; }

/* Browser tree */
.tree { padding-top: 2px; }
.tree li { display: flex; align-items: center; height: 17px; padding-left: 26px; }
.tree .root { padding-left: 13px; }
.twist { width: 5px; height: 5px; margin: 0 8px 0 -1px; border: solid #444; border-width: 1px 1px 0 0; transform: rotate(45deg); }
.open { border: solid transparent; border-width: 0 0 5px 5px; border-bottom-color: #222; margin-right: 8px; }
.node { display: flex; align-items: center; gap: 6px; height: 14px; padding: 0 7px 0 2px; background: #c8c8c8; font-weight: 500; white-space: nowrap; }
.node svg { width: 12px; height: 12px; color: #a9cbe8; }
.node .gear { color: #555; }
.node .lit { color: #f8ecae; }
.node span { margin-left: 3px; }
.tree .yellow { border-left: 4px solid #f5cf78; }
.tree .red { border-left: 4px solid #df6673; }
.tree .sky { border-left: 4px solid #83c6ec; }
.tree .lime { border-left: 4px solid #b7dc76; }
.tree .orange { border-left: 4px solid #ee9469; }
.tree .indigo { border-left: 2px solid #4f6fc4; padding-left: 4px; background: #747474; color: #fff; font-weight: 700; }
.tree .indigo span { text-decoration: underline dotted #aebbd4; }
.activate { display: grid; place-items: center; width: 17px; height: 14px; background: #cfcfcf; }
.activate input { appearance: none; width: 9px; height: 9px; margin: 0; border: 1px solid #777; border-radius: 50%; background: radial-gradient(#333 0 1px, #eee 3px); }

/* Floating panels */
.dock { display: flex; align-items: flex-start; gap: 4px; padding-top: 86px; }
.panel { display: flex; flex-direction: column; background: #dcdcdc; border: 1px solid #b2b2b2; box-shadow: 0 1px 2px #aaa; }
.palette { width: 177px; height: 100%; }
.mirror { width: 176px; }
.panel-head { flex: none; display: flex; align-items: center; height: 16px; padding: 0 2px 0 1px; background: #cfcfcf; border-left: 1px solid #999; border-bottom: 1px solid #b2b2b2; }
.pin { width: 6px; height: 6px; margin: 0 4px 0 6px; border-radius: 2px; background: #222; }
.panel-head svg { margin-left: auto; }
.panel-foot { flex: none; display: flex; align-items: center; justify-content: flex-end; gap: 6px; height: 25px; padding: 0 7px; background: #d0d0d0; border-top: 1px solid #b2b2b2; }
.btn { min-width: 42px; height: 14px; padding: 0 2px; border: 1px solid #bbb; background: #f0f0f0; font-size: 9px; line-height: 12px; }
.rows { position: relative; flex: 1; min-height: 0; overflow: hidden; }
.row { display: grid; grid-template-columns: 84px 12px; align-items: center; justify-items: center; height: 18px; padding-left: 6px; }
.row:nth-child(even) { height: 19px; }
.row label, .row span { justify-self: start; }
h3.row { display: flex; gap: 3px; padding-left: 1px; color: #222; font-weight: 700; }
.off { color: #a2a2a2; }
.strong { color: #111; font-weight: 500; }
.row input {
  appearance: none;
  display: grid;
  place-items: center;
  width: 10px;
  height: 10px;
  margin: 0;
  border: 1px solid #666;
  border-radius: 2px;
  background: linear-gradient(#d6d6d6, #f4f4f4);
}
.row input:checked::after { content: ""; width: 4px; height: 7px; border: solid #111; border-width: 0 1px 1px 0; transform: rotate(40deg); }
.scroll { position: absolute; top: 0; right: 1px; bottom: 0; width: 4px; background: linear-gradient(#888, #888) 0 0 / 100% 95% no-repeat, #c4c4c4; border-radius: 2px; }
.fields { padding: 1px 0 14px 6px; }
.field { display: grid; grid-template-columns: 53px 55px auto; align-items: center; height: 18px; }
.pick { display: flex; align-items: center; gap: 4px; height: 16px; padding-left: 2px; background: #c9c9c9; white-space: nowrap; }
.pick.on { background: #5187b5; color: #fff; font-weight: 600; }
.clear { margin-left: 6px; font: 9px/12px "DejaVu Sans", sans-serif; }
.info { margin-right: auto; }

/* View cube, navigation bar and status */
.cube { position: absolute; top: 24px; right: 26px; width: 38px; height: 38px; font: 10px/12px "Liberation Sans", sans-serif; }
.face { width: 100%; height: 100%; border: 1px solid #aaa; background: linear-gradient(#e0e1ea, #e0e1ea) 50% 50% / 22px 22px no-repeat, #e8e8e8; box-shadow: 0 0 4px #bbb; color: #8b8d95; font-size: 9px; }
.cube b { position: absolute; font-weight: 400; }
.ax-y { left: 0; top: -12px; color: #90e890; }
.ax-z { left: -6px; bottom: -8px; color: #6565e0; }
.ax-x { right: -8px; bottom: -3px; color: #ee8080; }
.navbar { position: absolute; left: 0; right: 0; bottom: 3px; margin: 0 auto; width: fit-content; display: flex; gap: 5px; }
.nav-set { display: flex; align-items: center; gap: 2px; height: 16px; padding: 0 2px; background: #c9c9c9; }
.nav-set .plain { gap: 2px; }
.nav-set .hand { margin-left: 3px; }
.status { position: absolute; right: 25px; bottom: 5px; color: #111; font-weight: 700; }

/* Timeline */
.timeline { flex: none; display: flex; height: 36px; padding: 0 3px 0 7px; background: #cbcbcb; }
.play { display: flex; gap: 8px; height: 30px; margin-right: 13px; }
.track { display: flex; padding-top: 5px; }
.span { position: relative; display: flex; height: 24px; padding-top: 4px; border-bottom: 1px solid #555; background: linear-gradient(90deg, #555 1px, transparent 1px) 8px 100% / 17px 3px repeat-x; }
.span:first-child { border-image: linear-gradient(90deg, transparent 8px, #555 8px) 1; }
.span svg { width: 14px; height: 14px; margin: 0 2px 0 1px; }
.span::before { content: ""; position: absolute; top: 0; left: 1px; right: 1px; height: 3px; background: var(--tint); }
.span.yellow { --tint: #efd08e; }
.span.sky { --tint: #93cbe8; }
.span.lime { --tint: #b9dc77; }
.span.orange { --tint: #e8946c; }
.span.indigo { --tint: #5272c9; }
.span.hatch { --tint: repeating-linear-gradient(115deg, #222 0 2px, #eccb55 2px 5px); }
.marker { width: 9px; height: 24px; margin-left: -2px; background: linear-gradient(#555, #555) 4px 0 / 1px 100% no-repeat; }
.marker::before { content: ""; display: block; border: solid transparent; border-width: 8px 5px 0; border-top-color: #555; }
.settings { margin: 0 0 7px auto; color: #555; }
```
